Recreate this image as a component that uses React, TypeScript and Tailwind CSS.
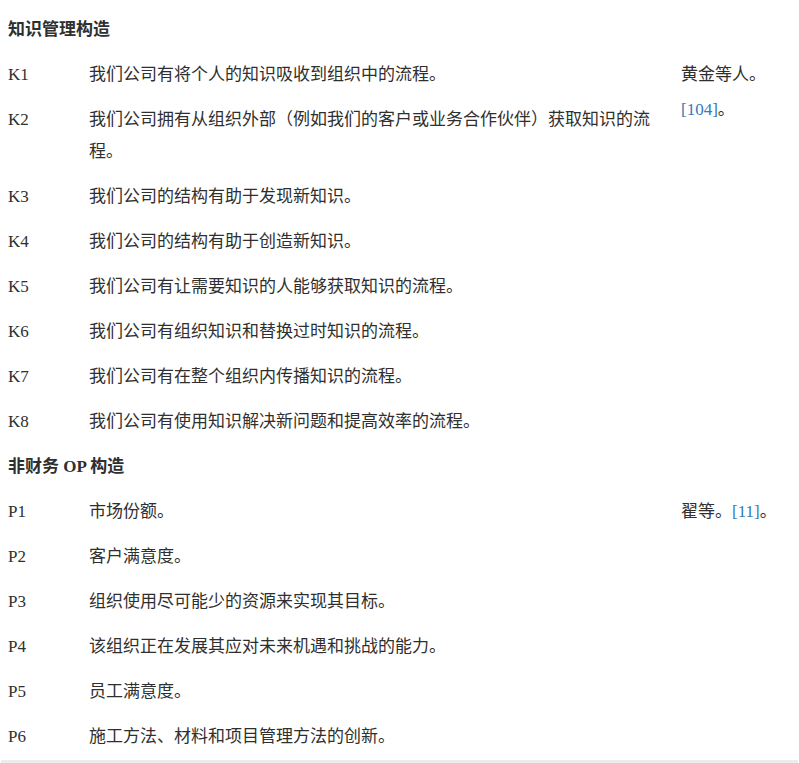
import React from "react";

type Row = { id: string; text: string };

const kRows: Row[] = [
  { id: "K1", text: "我们公司有将个人的知识吸收到组织中的流程。" },
  { id: "K2", text: "我们公司拥有从组织外部（例如我们的客户或业务合作伙伴）获取知识的流程。" },
  { id: "K3", text: "我们公司的结构有助于发现新知识。" },
  { id: "K4", text: "我们公司的结构有助于创造新知识。" },
  { id: "K5", text: "我们公司有让需要知识的人能够获取知识的流程。" },
  { id: "K6", text: "我们公司有组织知识和替换过时知识的流程。" },
  { id: "K7", text: "我们公司有在整个组织内传播知识的流程。" },
  { id: "K8", text: "我们公司有使用知识解决新问题和提高效率的流程。" },
];

const pRows: Row[] = [
  { id: "P1", text: "市场份额。" },
  { id: "P2", text: "客户满意度。" },
  { id: "P3", text: "组织使用尽可能少的资源来实现其目标。" },
  { id: "P4", text: "该组织正在发展其应对未来机遇和挑战的能力。" },
  { id: "P5", text: "员工满意度。" },
  { id: "P6", text: "施工方法、材料和项目管理方法的创新。" },
];

const cell = "py-[6.5px] leading-[32px]";

function Section({
  title,
  rows,
  refNode,
}: {
  title: string;
  rows: Row[];
  refNode: React.ReactNode;
}) {
  return (
    <>
      <div className={`${cell} col-span-3 pl-[8px] font-bold`}>{title}</div>
      {rows.map((r, i) => (
        <React.Fragment key={r.id}>
          <div className={`${cell} pl-[8px]`}>{r.id}</div>
          <div className={`${cell} pr-[20px]`}>{r.text}</div>
          {i === 0 && (
            <div
              className={`${cell} pr-[13px] self-start`}
              style={{ gridRow: `span ${rows.length}` }}
            >
              {refNode}
            </div>
          )}
        </React.Fragment>
      ))}
    </>
  );
}

export default function App() {
  return (
    <div className="w-full h-[763px] overflow-hidden bg-white text-[#2f2f2f] text-[17px] font-['Liberation_Serif','Noto_Sans_CJK_SC',serif] flex flex-col">
      <div className="pt-[7px] grid grid-cols-[89px_592px_118px]">
        <Section
          title="知识管理构造"
          rows={kRows}
          refNode={
            <>
              黄金等人。
              <a className="text-[#337ab7] leading-[38px]" href="#">
                [104]
              </a>
              。
            </>
          }
        />
        <Section
          title="非财务 OP 构造"
          rows={pRows}
          refNode={
            <>
              翟等。
              <a className="text-[#337ab7]" href="#">
                [11]
              </a>
              。
            </>
          }
        />
      </div>
      <div className="mt-[1px] mx-[1px] h-[3px] bg-[#ececec]" />
    </div>
  );
}
